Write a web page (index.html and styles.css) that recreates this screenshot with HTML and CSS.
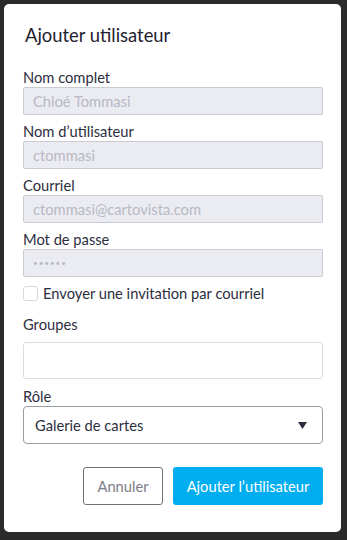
FILE: index.html
```html
<!DOCTYPE html>
<html lang="fr">
<head>
<meta charset="utf-8">
<link rel="stylesheet" href="styles.css">
</head>
<body>
<div class="dialog">
  <h1 class="title">Ajouter utilisateur</h1>
  <div class="field">
    <label class="label">Nom complet</label>
    <div class="input disabled">Chloé Tommasi</div>
  </div>
  <div class="field">
    <label class="label">Nom d’utilisateur</label>
    <div class="input disabled">ctommasi</div>
  </div>
  <div class="field">
    <label class="label">Courriel</label>
    <div class="input disabled">ctommasi@cartovista.com</div>
  </div>
  <div class="field">
    <label class="label">Mot de passe</label>
    <div class="input disabled dots">••••••</div>
  </div>
  <div class="check-row">
    <span class="checkbox"></span>
    <span class="check-text">Envoyer une invitation par courriel</span>
  </div>
  <div class="field groups">
    <label class="label">Groupes</label>
    <div class="input tall"></div>
  </div>
  <div class="field role">
    <label class="label">Rôle</label>
    <div class="select">
      <span>Galerie de cartes</span>
      <svg class="caret" width="9" height="7" viewBox="0 0 9 7"><path d="M0 0H9L4.5 7Z" fill="#2a2d3e"/></svg>
    </div>
  </div>
  <div class="actions">
    <button class="btn cancel">Annuler</button>
    <button class="btn primary">Ajouter l’utilisateur</button>
  </div>
</div>
</body>
</html>
```
FILE: styles.css
```css
html, body {
  margin: 0;
  padding: 0;
  background: #2b2b2b;
}
body {
  padding: 4px;
  font-family: Lato, "Noto Sans", sans-serif;
  color: #2c2e3e;
}
.dialog {
  box-sizing: border-box;
  width: 337px;
  height: 528px;
  background: #fff;
  border-radius: 5px;
  padding: 19px 18px 0 19px;
}
.title {
  margin: 0 0 22px 2px;
  font-size: 18.4px;
  line-height: 24px;
  font-weight: 400;
  color: #1f2130;
}
.field {
  display: flex;
  flex-direction: column;
  gap: 2px;
  margin-bottom: 8px;
}
.label {
  font-size: 14.7px;
  line-height: 16px;
  color: #2c2e3e;
}
.input {
  box-sizing: border-box;
  height: 28px;
  border: 1px solid #c9cad2;
  border-radius: 2px;
  padding: 0 9px;
  font-size: 14.7px;
  line-height: 26px;
}
.disabled {
  background: #ebebf2;
  color: #b8b9c4;
}
.dots {
  font-size: 8px;
  letter-spacing: 1px;
}
.check-row {
  display: flex;
  align-items: center;
  gap: 5px;
  margin-top: 3px;
  height: 16px;
}
.checkbox {
  box-sizing: border-box;
  width: 15px;
  height: 15px;
  border: 1px solid #d6d7dd;
  border-radius: 3px;
}
.check-text {
  font-size: 14.7px;
  line-height: 16px;
}
.groups {
  margin-top: 15px;
  gap: 10px;
  margin-bottom: 9px;
}
.tall {
  height: 37px;
  background: #fff;
  border: 1px solid #dddee3;
  border-radius: 3px;
}
.role {
  gap: 2px;
}
.select {
  box-sizing: border-box;
  height: 38px;
  border: 1px solid #9a9ca3;
  border-radius: 4px;
  display: flex;
  align-items: center;
  justify-content: space-between;
  padding: 0 15px 0 11px;
  font-size: 14.7px;
  color: #2c2e3e;
}
.actions {
  display: flex;
  justify-content: flex-end;
  gap: 10px;
  margin-top: 23px;
}
.btn {
  height: 38px;
  border-radius: 3px;
  font-family: inherit;
  font-size: 14.7px;
  padding: 0;
}
.cancel {
  width: 80px;
  background: #fff;
  border: 1px solid #6f717a;
  color: #7a7c86;
}
.primary {
  width: 150px;
  background: #00aeef;
  border: 0;
  color: #fff;
}
```
